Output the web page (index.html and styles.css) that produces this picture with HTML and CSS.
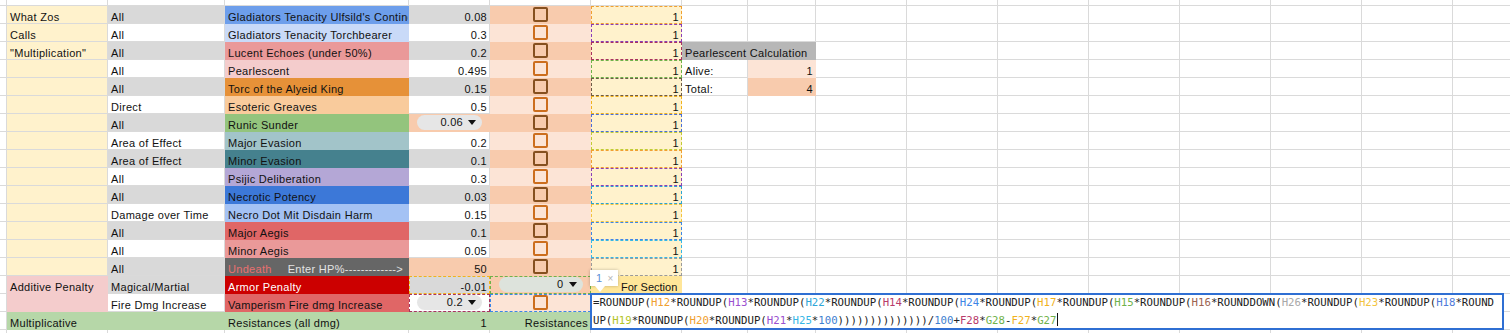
FILE: index.html
```html
<!DOCTYPE html>
<html lang="en">
<head>
    <meta charset="UTF-8">
    <title>Damage Mitigation Sheet</title>
    <link rel="stylesheet" href="styles.css">
</head>
<body>
<div class="sheet">
    <div class="row top">
        <div class="c"></div><div class="c"></div><div class="c"></div><div class="c"></div><div class="c"></div>
        <div class="c"></div><div class="c"></div><div class="c"></div><div class="c"></div><div class="rest"></div>
    </div>

    <div class="row">
        <div class="c"></div>
        <div class="c y">What Zos</div>
        <div class="c g">All</div>
        <div class="c f d-blue">Gladiators Tenacity Ulfsild's Contingency</div>
        <div class="c g num">0.08</div>
        <div class="c f pk ctr"><span class="box"></span></div>
        <div class="c f y num ref r-orange">1</div>
        <div class="c"></div><div class="c"></div><div class="rest"></div>
    </div>

    <div class="row">
        <div class="c"></div>
        <div class="c y">Calls</div>
        <div class="c">All</div>
        <div class="c f d-ltblue">Gladiators Tenacity Torchbearer</div>
        <div class="c num">0.3</div>
        <div class="c f lp ctr"><span class="box"></span></div>
        <div class="c f y num ref r-purple">1</div>
        <div class="c"></div><div class="c"></div><div class="rest"></div>
    </div>

    <div class="row">
        <div class="c"></div>
        <div class="c y">"Multiplication"</div>
        <div class="c g">All</div>
        <div class="c f d-rose">Lucent Echoes (under 50%)</div>
        <div class="c g num">0.2</div>
        <div class="c f pk ctr"><span class="box"></span></div>
        <div class="c f y num ref r-maroon">1</div>
        <div class="c f calc">Pearlescent Calculation</div><div class="rest"></div>
    </div>

    <div class="row">
        <div class="c"></div>
        <div class="c y"></div>
        <div class="c">All</div>
        <div class="c f d-pink">Pearlescent</div>
        <div class="c num">0.495</div>
        <div class="c f lp ctr"><span class="box"></span></div>
        <div class="c f y num ref r-green">1</div>
        <div class="c">Alive:</div><div class="c f lp num">1</div><div class="rest"></div>
    </div>

    <div class="row">
        <div class="c"></div>
        <div class="c y"></div>
        <div class="c g">All</div>
        <div class="c f d-orange">Torc of the Alyeid King</div>
        <div class="c g num">0.15</div>
        <div class="c f pk ctr"><span class="box"></span></div>
        <div class="c f y num ref r-brown">1</div>
        <div class="c">Total:</div><div class="c f pk num">4</div><div class="rest"></div>
    </div>

    <div class="row">
        <div class="c"></div>
        <div class="c y"></div>
        <div class="c">Direct</div>
        <div class="c f d-peach">Esoteric Greaves</div>
        <div class="c num">0.5</div>
        <div class="c f lp ctr"><span class="box"></span></div>
        <div class="c f y num ref r-amber">1</div>
        <div class="c"></div><div class="c"></div><div class="rest"></div>
    </div>

    <div class="row">
        <div class="c"></div>
        <div class="c y"></div>
        <div class="c g">All</div>
        <div class="c f d-green">Runic Sunder</div>
        <div class="c f pk ctr"><span class="pill">0.06<i class="tri"></i></span></div>
        <div class="c f pk ctr"><span class="box"></span></div>
        <div class="c f y num ref r-blue">1</div>
        <div class="c"></div><div class="c"></div><div class="rest"></div>
    </div>

    <div class="row">
        <div class="c"></div>
        <div class="c y"></div>
        <div class="c">Area of Effect</div>
        <div class="c f d-sage">Major Evasion</div>
        <div class="c num">0.2</div>
        <div class="c f lp ctr"><span class="box"></span></div>
        <div class="c f y num ref r-lime">1</div>
        <div class="c"></div><div class="c"></div><div class="rest"></div>
    </div>

    <div class="row">
        <div class="c"></div>
        <div class="c y"></div>
        <div class="c g">Area of Effect</div>
        <div class="c f d-teal">Minor Evasion</div>
        <div class="c g num">0.1</div>
        <div class="c f pk ctr"><span class="box"></span></div>
        <div class="c f y num ref r-orange">1</div>
        <div class="c"></div><div class="c"></div><div class="rest"></div>
    </div>

    <div class="row">
        <div class="c"></div>
        <div class="c y"></div>
        <div class="c">All</div>
        <div class="c f d-lilac">Psijic Deliberation</div>
        <div class="c num">0.3</div>
        <div class="c f lp ctr"><span class="box"></span></div>
        <div class="c f y num ref r-purple">1</div>
        <div class="c"></div><div class="c"></div><div class="rest"></div>
    </div>

    <div class="row">
        <div class="c"></div>
        <div class="c y"></div>
        <div class="c g">All</div>
        <div class="c f d-royal">Necrotic Potency</div>
        <div class="c g num">0.03</div>
        <div class="c f pk ctr"><span class="box"></span></div>
        <div class="c f y num ref r-cyan">1</div>
        <div class="c"></div><div class="c"></div><div class="rest"></div>
    </div>

    <div class="row">
        <div class="c"></div>
        <div class="c y"></div>
        <div class="c">Damage over Time</div>
        <div class="c f d-sky">Necro Dot Mit Disdain Harm</div>
        <div class="c num">0.15</div>
        <div class="c f lp ctr"><span class="box"></span></div>
        <div class="c f y num ref r-yellow">1</div>
        <div class="c"></div><div class="c"></div><div class="rest"></div>
    </div>

    <div class="row">
        <div class="c"></div>
        <div class="c y"></div>
        <div class="c g">All</div>
        <div class="c f d-red">Major Aegis</div>
        <div class="c g num">0.1</div>
        <div class="c f pk ctr"><span class="box"></span></div>
        <div class="c f y num ref r-blue2">1</div>
        <div class="c"></div><div class="c"></div><div class="rest"></div>
    </div>

    <div class="row">
        <div class="c"></div>
        <div class="c y"></div>
        <div class="c">All</div>
        <div class="c f d-rose">Minor Aegis</div>
        <div class="c num">0.05</div>
        <div class="c f lp ctr"><span class="box"></span></div>
        <div class="c f y num ref r-cyan2">1</div>
        <div class="c"></div><div class="c"></div><div class="rest"></div>
    </div>

    <div class="row">
        <div class="c"></div>
        <div class="c y"></div>
        <div class="c g">All</div>
        <div class="c f d-dark"><span class="undeath">Undeath</span><span class="hp">Enter HP%-------------&gt;</span></div>
        <div class="c f pk num">50</div>
        <div class="c f pk ctr"><span class="box"></span></div>
        <div class="c f y num ref r-gray">1</div>
        <div class="c"></div><div class="c"></div><div class="rest"></div>
    </div>

    <div class="row">
        <div class="c"></div>
        <div class="c f pen">Additive Penalty</div>
        <div class="c g">Magical/Martial</div>
        <div class="c f d-crimson">Armor Penalty</div>
        <div class="c g num ref r-amber">-0.01</div>
        <div class="c f pk ctr ref r-green"><span class="pill tint">0<i class="tri"></i></span></div>
        <div class="c f gold section">For Section</div>
        <div class="c"></div><div class="c"></div><div class="rest"></div>
    </div>

    <div class="row">
        <div class="c"></div>
        <div class="c f pen"></div>
        <div class="c">Fire Dmg Increase</div>
        <div class="c f d-red">Vamperism Fire dmg Increase</div>
        <div class="c ctr ref r-maroon"><span class="pill">0.2<i class="tri"></i></span></div>
        <div class="c f lp ctr ref r-blue2"><span class="box"></span></div>
        <div class="c"></div>
        <div class="c"></div><div class="c"></div><div class="rest"></div>
    </div>

    <div class="row">
        <div class="c"></div>
        <div class="c f mult">Multiplicative</div>
        <div class="c f mult"></div>
        <div class="c f mult">Resistances (all dmg)</div>
        <div class="c f mult num">1</div>
        <div class="c f mult num">Resistances</div>
        <div class="c"></div>
        <div class="c"></div><div class="c"></div><div class="rest"></div>
    </div>

    <div class="row">
        <div class="c"></div><div class="c"></div><div class="c"></div><div class="c"></div><div class="c"></div>
        <div class="c"></div><div class="c"></div><div class="c"></div><div class="c"></div><div class="rest"></div>
    </div>

    <!-- reference count tip over the formula editor -->
    <div class="tip"><span class="tip-n">1</span><span class="tip-x">×</span></div>

    <!-- in-cell formula editor -->
    <div class="editor">
        <div class="line">=ROUNDUP(<span class="k12">H12</span>*ROUNDUP(<span class="k13">H13</span>*ROUNDUP(<span class="k22">H22</span>*ROUNDUP(<span class="k14">H14</span>*ROUNDUP(<span class="k24">H24</span>*ROUNDUP(<span class="k17">H17</span>*ROUNDUP(<span class="k15">H15</span>*ROUNDUP(<span class="k16">H16</span>*ROUNDDOWN(<span class="k26">H26</span>*ROUNDUP(<span class="k23">H23</span>*ROUNDUP(<span class="k18">H18</span>*ROUND</div>
        <div class="line">UP(<span class="k19">H19</span>*ROUNDUP(<span class="k20">H20</span>*ROUNDUP(<span class="k21">H21</span>*<span class="k25">H25</span>*<span class="kn">100</span>))))))))))))))/<span class="kn">100</span>+<span class="k14">F28</span>*<span class="k15">G28</span>-<span class="k17">F27</span>*<span class="k15">G27</span><span class="caret"></span></div>
    </div>
</div>
</body>
</html>
```

FILE: styles.css
```css
body {
    margin: 0;
    background: #fff;
    overflow: hidden;
    font-family: "Liberation Sans", Arial, sans-serif;
    font-size: 11px;
    letter-spacing: 0.3px;
    color: #111;
}

.sheet {
    position: relative;
    width: 1510px;
    height: 333px;
    overflow: hidden;
}

.row {
    display: grid;
    grid-template-columns: 7px 101px 117px 184px 81px 101px 91px 66px 68px 1fr;
    height: 18px;
}
.row.top {
    height: 6px;
}

.c {
    box-sizing: border-box;
    border-right: 1px solid #dadada;
    border-bottom: 1px solid #dadada;
    padding: 3px 3px 0;
    line-height: 16px;
    white-space: nowrap;
    overflow: hidden;
}
.rest {
    border-bottom: 1px solid #dadada;
    background: repeating-linear-gradient(to right, transparent 0 90px, #dadada 90px 91px);
}

/* filled cells hide the gridlines */
.f { border-color: transparent; }

.num { text-align: right; padding-right: 2px; }
.ctr {
    display: flex;
    align-items: center;
    justify-content: center;
    padding: 0;
}

.y { background: #fff2cc; }
.g { background: #d9d9d9; }
.pk { background: #f8cbad; }
.lp { background: #fce4d6; }
.pen { background: #f4cccc; }
.mult { background: #b6d7a8; }
.gold { background: #ffe699; }
.calc { background: #b7b7b7; grid-column: span 2; }

.d-blue { background: #6d9eeb; }
.d-ltblue { background: #c9daf8; }
.d-rose { background: #ea9999; }
.d-pink { background: #f4cccc; }
.d-orange { background: #e69138; }
.d-peach { background: #f9cb9c; }
.d-green { background: #93c47d; }
.d-sage { background: #a2c4c9; }
.d-teal { background: #45818e; }
.d-lilac { background: #b4a7d6; }
.d-royal { background: #3c78d8; }
.d-sky { background: #a4c2f4; }
.d-red { background: #e06666; }
.d-dark { background: #666666; }
.d-crimson { background: #cc0000; color: #fff; }

.undeath { color: #e87070; }
.hp { color: #e3e3e3; margin-left: 16px; }

.section { padding-left: 30px; letter-spacing: 0; }

/* reference highlight borders */
.ref { outline: 1px dashed; outline-offset: -1px; }
.r-orange { outline-color: #f0a030; }
.r-purple { outline-color: #8a3fb8; }
.r-maroon { outline-color: #a8335f; }
.r-green { outline-color: #6fb24a; }
.r-brown { outline-color: #6e5a48; }
.r-amber { outline-color: #f1b21c; }
.r-blue { outline-color: #4a6fd8; }
.r-lime { outline-color: #c2cc35; }
.r-cyan { outline-color: #2aa3d4; }
.r-yellow { outline-color: #f3c43e; }
.r-blue2 { outline-color: #3d86e6; }
.r-cyan2 { outline-color: #37b6e6; }
.r-gray { outline-color: #9a9a9a; }

.box {
    box-sizing: border-box;
    width: 15px;
    height: 15px;
    border: 2px solid #cc6e1e;
    border-radius: 2px;
}
.pk .box { border-color: #86501f; }

.pill {
    box-sizing: border-box;
    display: flex;
    align-items: center;
    justify-content: flex-end;
    width: 65px;
    height: 15px;
    margin-left: 1px;
    padding-right: 6px;
    border-radius: 8px;
    background: #e6e6e6;
    line-height: 15px;
}
.pill.tint { width: 84px; background: #dde3dc; }
.tri {
    width: 0;
    height: 0;
    margin-left: 5px;
    border-left: 4.5px solid transparent;
    border-right: 4.5px solid transparent;
    border-top: 5px solid #111;
}

.tip {
    position: absolute;
    left: 590px;
    top: 270px;
    width: 28px;
    height: 16px;
    background: #fff;
    box-shadow: 0 0 3px rgba(0, 0, 0, 0.25);
    display: flex;
    align-items: center;
    gap: 5px;
    padding-left: 6px;
    box-sizing: border-box;
    font-size: 11px;
}
.tip::after {
    content: "";
    position: absolute;
    left: 5px;
    bottom: -6px;
    border-left: 5px solid transparent;
    border-right: 5px solid transparent;
    border-top: 6px solid #fff;
}
.tip-n { color: #5b8fd6; }
.tip-x { color: #b5b5b5; font-size: 10px; }

.editor {
    position: absolute;
    left: 590px;
    top: 293px;
    width: 914px;
    height: 37px;
    box-sizing: border-box;
    border: 2px solid #2f6fd3;
    background: #fff;
    padding: 0 0 0 1px;
    font-family: "DejaVu Sans Mono", monospace;
    font-size: 10.7px;
    letter-spacing: 0;
    color: #222;
}
.line {
    height: 18px;
    line-height: 16px;
    white-space: nowrap;
    overflow: hidden;
}
.caret {
    display: inline-block;
    width: 1px;
    height: 13px;
    margin-left: 1px;
    vertical-align: -2px;
    background: #111;
}

.k12 { color: #f0a030; }
.k13 { color: #9b4fcf; }
.k14 { color: #b83b6a; }
.k15 { color: #6fb24a; }
.k16 { color: #9c6350; }
.k17 { color: #f1b21c; }
.k18 { color: #4f7ad9; }
.k19 { color: #b4c428; }
.k20 { color: #f0a030; }
.k21 { color: #9b4fcf; }
.k22 { color: #2fa6d8; }
.k23 { color: #f3c43e; }
.k24 { color: #3d86e6; }
.k25 { color: #37b6e6; }
.k26 { color: #a8a8a8; }
.kn { color: #3f7fd0; }
```
